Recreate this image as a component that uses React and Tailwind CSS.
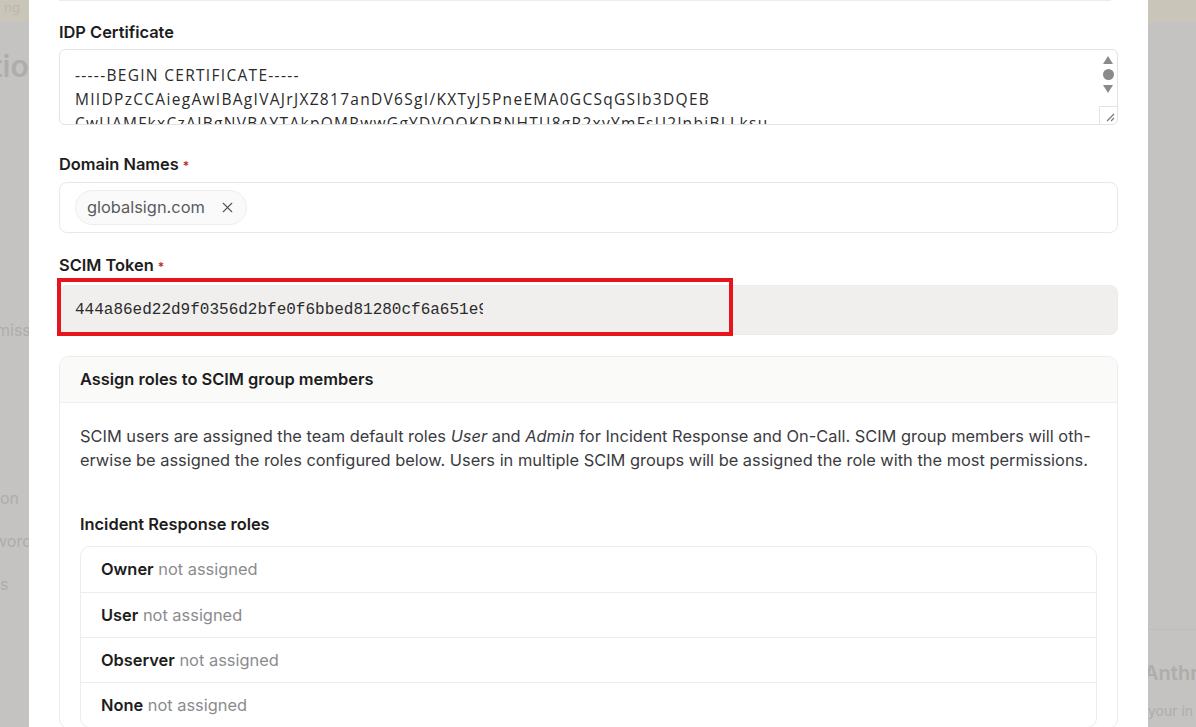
import { X } from 'lucide-react'

const FONT = { fontFamily: 'Inter, "Noto Sans", sans-serif' }

const CERT_LINES = [
  '-----BEGIN CERTIFICATE-----',
  'MIIDPzCCAiegAwIBAgIVAJrJXZ817anDV6SgI/KXTyJ5PneEMA0GCSqGSIb3DQEB',
  'CwUAMFkxCzAJBgNVBAYTAkpQMRwwGgYDVQQKDBNHTU8gR2xvYmFsU2lnbiBLLksu',
]

const ROLES = ['Owner', 'User', 'Observer', 'None']

function Label({ children, required }) {
  return (
    <div className="text-[16.4px] leading-6 font-semibold text-[#1d1d20]">
      {children}
      {required ? <span className="ml-1 text-[12px] text-[#c0262d]">*</span> : null}
    </div>
  )
}

function Backdrop() {
  return (
    <div className="flex h-full flex-col text-[#aeadaa]">
      <div className="h-[22px] bg-[#c9c5b9] pl-1 text-[13px] leading-[14px] text-[#bdb8ab]">ng</div>
      <div className="flex flex-1">
        <div className="flex w-[29px] flex-col overflow-hidden whitespace-nowrap" style={FONT}>
          <div className="mt-[28px] -ml-[8px] text-[30px] leading-8 font-semibold">tio</div>
          <div className="mt-[236px] -ml-[4px] text-[16px]">miss</div>
          <div className="mt-[144px] -ml-[4px] text-[16px]">ion</div>
          <div className="mt-[19px] -ml-[6px] text-[16px]">word</div>
          <div className="mt-[19px] text-[16px]">s</div>
        </div>
        <div className="flex-1" />
        <div className="flex w-[48px] flex-col overflow-hidden whitespace-nowrap" style={FONT}>
          <div className="mt-[607px] h-px w-full bg-[#bdbcba]" />
          <div className="mt-[28px] -ml-[4px] text-[20px] font-semibold">Anthro</div>
          <div className="mt-[12px] text-[14px]">your in</div>
        </div>
      </div>
    </div>
  )
}

function CertificateBox() {
  return (
    <div className="mt-[5px] flex h-[76px] overflow-hidden rounded-[6px] border border-[#e3e3e3]">
      <div
        className="flex-1 overflow-hidden whitespace-nowrap pl-[15px] pt-[13px] text-[15.5px] leading-6 tracking-[1.3px] text-[#2a2a2a]"
        style={{ fontFamily: '"Open Sans", "Liberation Sans", sans-serif' }}
      >
        {CERT_LINES.map((l) => (
          <div key={l}>{l}</div>
        ))}
      </div>
      <div className="flex w-[18px] flex-col items-center pt-[5px]">
        <svg width="12" height="10" viewBox="0 0 12 10">
          <path d="M6 1 L11 9 L1 9 Z" fill="#8a8a8a" />
        </svg>
        <div className="mt-[4px] h-[11px] w-[11px] rounded-full bg-[#8a8a8a]" />
        <svg className="mt-[4px]" width="12" height="10" viewBox="0 0 12 10">
          <path d="M1 1 L11 1 L6 9 Z" fill="#8a8a8a" />
        </svg>
        <div className="mt-auto flex h-[18px] w-[18px] items-end justify-end border-t border-l border-[#e3e3e3] p-[2px]">
          <svg width="10" height="10" viewBox="0 0 10 10">
            <path d="M9 2 L2 9 M9 6 L6 9" stroke="#777" strokeWidth="1.2" />
          </svg>
        </div>
      </div>
    </div>
  )
}

function RoleAssignments() {
  return (
    <div className="mt-[21px] overflow-hidden rounded-[10px] border border-[#ececec]">
      <div className="h-[46px] border-b border-[#efefef] bg-[#fafaf9] px-[20px] text-[16.4px] leading-[45px] font-semibold text-[#1d1d20]">
        Assign roles to SCIM group members
      </div>
      <div className="px-[20px] pt-[21px]">
        <p className="text-[16.4px] leading-6 text-[#3b3b3f]">
          SCIM users are assigned the team default roles <em>User</em> and <em>Admin</em> for Incident
          Response and On-Call. SCIM group members will oth-
          <br />
          erwise be assigned the roles configured below. Users in multiple SCIM groups will be assigned
          the role with the most permissions.
        </p>
        <div className="mt-[40px] text-[16.4px] leading-6 font-semibold text-[#1d1d20]">
          Incident Response roles
        </div>
        <div className="mt-[10px] rounded-[10px] border border-[#ececec]">
          {ROLES.map((r, i) => (
            <div
              key={r}
              className={
                'h-[45px] px-[20px] text-[16.4px] leading-[45px] ' +
                (i > 0 ? 'border-t border-[#ececec]' : '')
              }
            >
              <span className="font-semibold text-[#1d1d20]">{r}</span>{' '}
              <span className="text-[#8b8b8e]">not assigned</span>
            </div>
          ))}
        </div>
      </div>
    </div>
  )
}

export default function App() {
  return (
    <div className="relative h-[727px] w-full overflow-hidden bg-[#c4c3c1]">
      <Backdrop />

      <div
        className="absolute top-0 left-[29px] h-full w-[1119px] overflow-hidden bg-white px-[30px]"
        style={FONT}
      >
        <div className="h-px w-[1052px] bg-[#ececec]" />

        <div className="mt-[19px]">
          <Label>IDP Certificate</Label>
          <CertificateBox />
        </div>

        <div className="mt-[27px]">
          <Label required>Domain Names</Label>
          <div className="mt-[4px] flex h-[51px] items-center rounded-[8px] border border-[#e8e8e8] px-[15px]">
            <div className="flex h-[35px] items-center gap-[14px] rounded-full border border-[#ededed] bg-[#fafafa] pr-[10px] pl-[11px] text-[16.4px] text-[#5a5a5e]">
              globalsign.com
              <X size={17} strokeWidth={1.6} className="text-[#555]" />
            </div>
          </div>
        </div>

        <div className="mt-[20px]">
          <Label required>SCIM Token</Label>
          <div className="relative mt-[6px]">
            <div className="flex h-[50px] items-center rounded-[8px] border border-[#ebebea] bg-[#f0efee] px-[15px]">
              <div
                className="w-[408px] overflow-hidden whitespace-nowrap text-[16px] text-[#2b2b2b]"
                style={{ fontFamily: '"Liberation Mono", "DejaVu Sans Mono", monospace' }}
              >
                444a86ed22d9f0356d2bfe0f6bbed81280cf6a651e9f07
              </div>
            </div>
            <div className="pointer-events-none absolute -top-[7px] -left-[2px] h-[58px] w-[676px] border-4 border-[#e5141d]" />
          </div>
        </div>

        <RoleAssignments />
      </div>
    </div>
  )
}
